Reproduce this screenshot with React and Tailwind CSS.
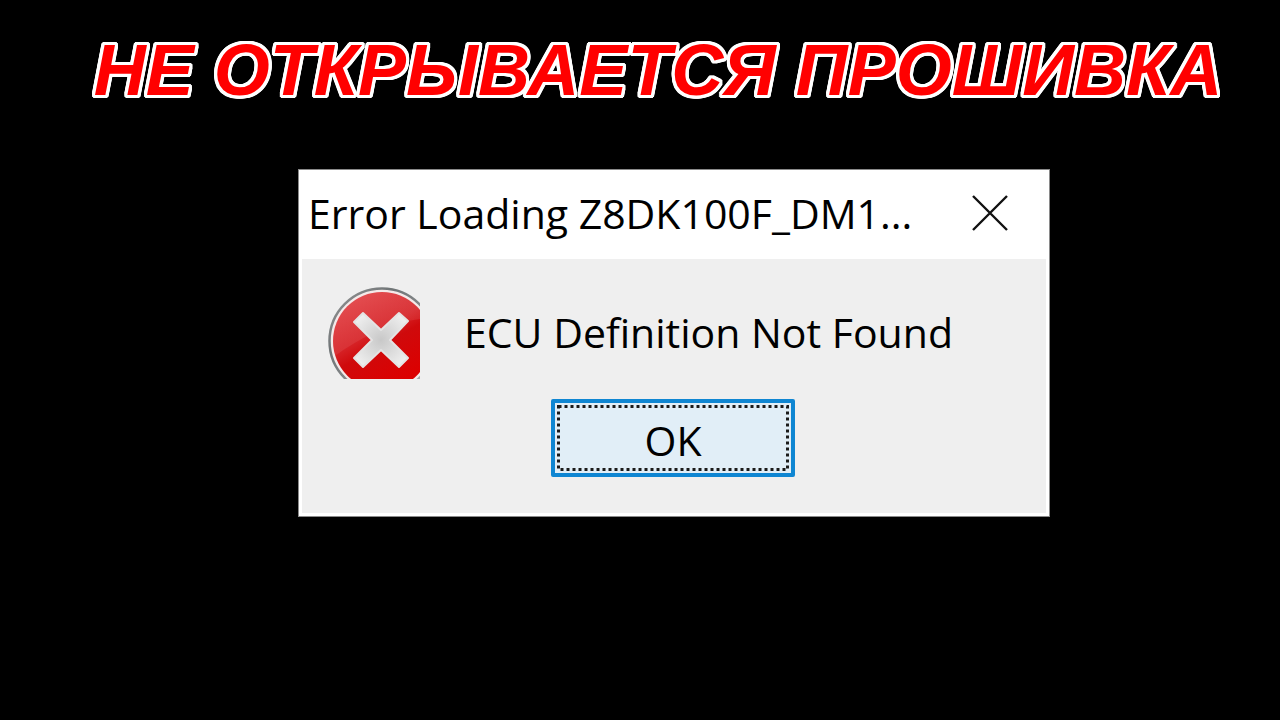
import { useState } from 'react'

function ErrorIcon() {
  return (
    <svg viewBox="0 0 92 92" className="h-[92px] w-[92px] shrink-0" aria-hidden="true">
      <defs>
        <linearGradient id="ring" x1="0" y1="0" x2="1" y2="1">
          <stop offset="0" stopColor="#9a9a9a" />
          <stop offset="0.3" stopColor="#6f7476" />
          <stop offset="1" stopColor="#b5b5b5" />
        </linearGradient>
        <linearGradient id="ball" x1="0.2" y1="0" x2="0.7" y2="0.9">
          <stop offset="0" stopColor="#e23a3e" />
          <stop offset="0.45" stopColor="#d62226" />
          <stop offset="0.6" stopColor="#cf0a0c" />
          <stop offset="1" stopColor="#dc0000" />
        </linearGradient>
        <linearGradient id="gloss" x1="0" y1="0" x2="0.3" y2="1">
          <stop offset="0" stopColor="#ffffff" stopOpacity="0.12" />
          <stop offset="1" stopColor="#ffffff" stopOpacity="0.06" />
        </linearGradient>
        <radialGradient id="cross" cx="0.5" cy="0.5" r="0.6">
          <stop offset="0" stopColor="#c8c8c8" />
          <stop offset="1" stopColor="#f0f0f0" />
        </radialGradient>
        <clipPath id="disc">
          <circle cx="54" cy="54" r="49" />
        </clipPath>
      </defs>
      <circle cx="54" cy="54" r="52.5" fill="#f4e9e9" stroke="url(#ring)" strokeWidth="2.5" />
      <circle cx="54" cy="54" r="49" fill="url(#ball)" />
      <path d="M0 0H92V32C60 36 32 50 0 74Z" fill="url(#gloss)" clipPath="url(#disc)" />
      <path
        d="M35 26L53 43L71 26L80 34L62 53L80 71L71 80L53 63L35 80L26 71L44 53L26 35Z"
        fill="url(#cross)"
        stroke="#e4e4e4"
        strokeWidth="2"
        strokeLinejoin="round"
      />
    </svg>
  )
}

function CloseIcon() {
  return (
    <svg viewBox="0 0 36 36" className="h-9 w-9" fill="none" stroke="#111111" strokeWidth="2.4" aria-hidden="true">
      <path d="M1 1L35 35M35 1L1 35" />
    </svg>
  )
}

export default function App() {
  const [open, setOpen] = useState(true)
  const close = () => setOpen(false)

  return (
    <main className="min-h-screen bg-black font-['Open_Sans','Noto_Sans',sans-serif] text-black">
      <h1 className="pt-[30px] pl-9 text-center font-['Liberation_Sans',Arial,sans-serif] text-[72px] leading-[80px] font-bold italic whitespace-nowrap text-[#ff0000] [text-shadow:3px_0_white,3px_1px_white,3px_2px_white,2px_3px_white,1px_3px_white,0_3px_white,-1px_3px_white,-2px_3px_white,-3px_2px_white,-3px_1px_white,-3px_0_white,-3px_-1px_white,-3px_-2px_white,-2px_-3px_white,-1px_-3px_white,0_-3px_white,1px_-3px_white,2px_-3px_white,3px_-2px_white,3px_-1px_white]">
        НЕ ОТКРЫВАЕТСЯ ПРОШИВКА
      </h1>

      {open && (
        <div className="flex justify-center pt-[59px] pl-[68px]">
          <section
            role="alertdialog"
            aria-labelledby="dialog-title"
            aria-describedby="dialog-message"
            className="w-full max-w-[752px] border border-[#8a8a8a] bg-white"
          >
            {/* Title bar */}
            <header className="flex h-[89px] items-center justify-between pr-[41px] pb-[3px] pl-[9px]">
              <h2 id="dialog-title" className="text-[41px] leading-[56px] whitespace-nowrap">
                Error Loading Z8DK100F_DM1...
              </h2>
              <button type="button" aria-label="Close" onClick={close}>
                <CloseIcon />
              </button>
            </header>

            <div className="mx-[3px] mb-[3px] bg-[#efefef] px-[26px] pt-7 pb-9">
              <div className="flex items-center gap-11">
                <ErrorIcon />
                <p id="dialog-message" className="pb-[3px] text-[41px] leading-[56px] whitespace-nowrap">
                  ECU Definition Not Found
                </p>
              </div>
              <div className="mt-5 flex justify-center pr-[2px]">
                <button
                  type="button"
                  onClick={close}
                  className="relative h-[78px] w-[244px] rounded-xs border-4 border-[#0f86d2] bg-[#e1eef7] pt-1 text-[41px] leading-[56px]"
                >
                  OK
                  {/* Focus rectangle */}
                  <svg className="absolute inset-[2px] h-[66px] w-[232px]" aria-hidden="true">
                    <rect x="1.5" y="1.5" width="229" height="63" fill="none" stroke="#1a1a1a" strokeWidth="3" strokeDasharray="3 3" />
                  </svg>
                </button>
              </div>
            </div>
          </section>
        </div>
      )}
    </main>
  )
}
